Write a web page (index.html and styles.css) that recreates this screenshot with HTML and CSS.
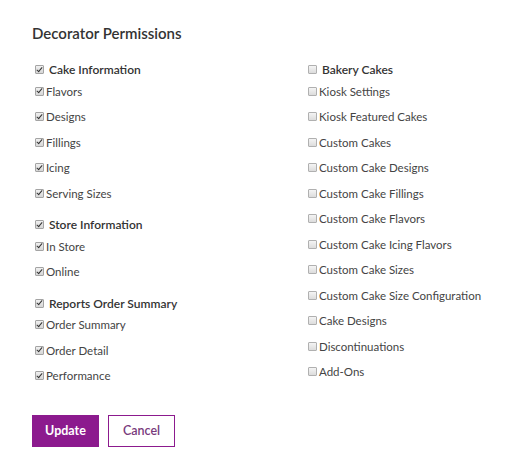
FILE: index.html
```html
<!DOCTYPE html>
<html>
<head>
<meta charset="utf-8">
<link rel="stylesheet" href="styles.css">
</head>
<body>
<div class="panel">
  <h1 class="title">Decorator Permissions</h1>
  <div class="cols">
    <div class="col">
      <div class="group">
        <div class="head"><span class="cb on"></span>Cake Information</div>
        <div class="item"><span class="cb on"></span>Flavors</div>
        <div class="item"><span class="cb on"></span>Designs</div>
        <div class="item"><span class="cb on"></span>Fillings</div>
        <div class="item"><span class="cb on"></span>Icing</div>
        <div class="item"><span class="cb on"></span>Serving Sizes</div>
      </div>
      <div class="group">
        <div class="head"><span class="cb on"></span>Store Information</div>
        <div class="item"><span class="cb on"></span>In Store</div>
        <div class="item"><span class="cb on"></span>Online</div>
      </div>
      <div class="group">
        <div class="head"><span class="cb on"></span>Reports Order Summary</div>
        <div class="item"><span class="cb on"></span>Order Summary</div>
        <div class="item"><span class="cb on"></span>Order Detail</div>
        <div class="item"><span class="cb on"></span>Performance</div>
      </div>
    </div>
    <div class="col right">
      <div class="group">
        <div class="head"><span class="cb"></span>Bakery Cakes</div>
        <div class="item"><span class="cb"></span>Kiosk Settings</div>
        <div class="item"><span class="cb"></span>Kiosk Featured Cakes</div>
        <div class="item"><span class="cb"></span>Custom Cakes</div>
        <div class="item"><span class="cb"></span>Custom Cake Designs</div>
        <div class="item"><span class="cb"></span>Custom Cake Fillings</div>
        <div class="item"><span class="cb"></span>Custom Cake Flavors</div>
        <div class="item"><span class="cb"></span>Custom Cake Icing Flavors</div>
        <div class="item"><span class="cb"></span>Custom Cake Sizes</div>
        <div class="item"><span class="cb"></span>Custom Cake Size Configuration</div>
        <div class="item"><span class="cb"></span>Cake Designs</div>
        <div class="item"><span class="cb"></span>Discontinuations</div>
        <div class="item"><span class="cb"></span>Add-Ons</div>
      </div>
    </div>
  </div>
  <div class="actions">
    <button class="btn primary">Update</button>
    <button class="btn secondary">Cancel</button>
  </div>
</div>
</body>
</html>
```
FILE: styles.css
```css
html, body {
  margin: 0;
  padding: 0;
  background: #fff;
}
body {
  font-family: Lato, "Open Sans", sans-serif;
  color: #444;
}
.panel {
  padding: 20px 32px 0 32px;
}
.title {
  margin: 0 0 14.5px 0;
  font-size: 15px;
  line-height: 26px;
  font-weight: 600;
  color: #333;
}
.cols {
  display: grid;
  grid-template-columns: 273px 1fr;
}
.col {
  display: flex;
  flex-direction: column;
  gap: 9.5px;
  padding-left: 3px;
}
.head {
  height: 18px;
  display: flex;
  align-items: center;
  font-size: 12px;
  font-weight: 600;
  color: #333;
  white-space: nowrap;
}
.head .cb {
  margin-right: 5px;
}
.item {
  height: 25.5px;
  display: flex;
  align-items: center;
  font-size: 11.5px;
  color: #444;
  white-space: nowrap;
}
.item .cb {
  margin-right: 2px;
}
.cb {
  width: 7px;
  height: 7px;
  border: 1px solid #b0b0b0;
  border-radius: 1px;
  background: linear-gradient(#f4f4f4, #dcdcdc);
  flex: none;
  position: relative;
  box-sizing: content-box;
}
.cb.on {
  border-color: #a4a4a4;
  background: linear-gradient(#f0f0f0, #d6d6d6);
}
.cb.on::after {
  content: "";
  position: absolute;
  left: 2px;
  top: -0.5px;
  width: 2px;
  height: 5px;
  border: solid #333;
  border-width: 0 1.6px 1.6px 0;
  transform: rotate(40deg);
}
.actions {
  display: flex;
  gap: 9px;
  margin-top: 26px;
}
.btn {
  width: 67px;
  height: 32px;
  font-family: Lato, "Open Sans", sans-serif;
  font-size: 12.5px;
  font-weight: 700;
  box-sizing: border-box;
  cursor: pointer;
  padding: 0;
}
.primary {
  background: #8c1a8e;
  color: #fff;
  border: 1px solid #8c1a8e;
}
.secondary {
  background: #fff;
  color: #783a7c;
  font-weight: 600;
  border: 1px solid #8c1a8e;
}
```
